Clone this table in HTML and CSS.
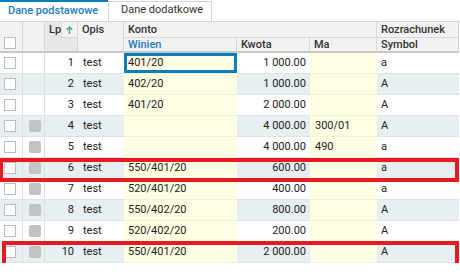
FILE: index.html
```html
<!DOCTYPE html>
<html>
    <head>
        <meta charset="utf-8" />
        <title>Dane podstawowe</title>
        <link rel="stylesheet" href="styles.css">
    </head>
    <body>
        <div class="tabs">
            <div class="tab active">Dane podstawowe</div>
            <div class="tab">Dane dodatkowe</div>
        </div>
        <table class="grid" cellspacing="0" cellpadding="0">
            <colgroup>
                <col style="width:23px"><col style="width:22px"><col style="width:33px"><col style="width:46px">
                <col style="width:113px"><col style="width:73px"><col style="width:67px"><col style="width:82px">
            </colgroup>
            <thead>
                <tr class="h1">
                    <th rowspan="2" class="chk bottom"><span class="box"></span></th>
                    <th rowspan="2"></th>
                    <th rowspan="2" class="lp">
                        <div class="lp-in">
                            <span class="lp-label">Lp</span>
                            <span class="sort">
                                <svg width="7" height="8" viewBox="0 0 7 8"><path d="M3.5 1V8M0.8 3.7L3.5 1L6.2 3.7" fill="none" stroke="#4fae77" stroke-width="1.5"/></svg>
                            </span>
                        </div>
                    </th>
                    <th rowspan="2">Opis</th>
                    <th colspan="3">Konto</th>
                    <th>Rozrachunek</th>
                </tr>
                <tr class="h2">
                    <th class="blue">Winien</th>
                    <th>Kwota</th>
                    <th>Ma</th>
                    <th>Symbol</th>
                </tr>
            </thead>
            <tbody>
                <tr><td class="chk"><span class="box"></span></td><td class="mk"></td><td class="num">1</td><td>test</td><td class="ed focus">401/20</td><td class="num">1&nbsp;000.00</td><td class="ed"></td><td>a</td></tr>
                <tr class="alt"><td class="chk"><span class="box"></span></td><td class="mk"></td><td class="num">2</td><td>test</td><td class="ed">402/20</td><td class="num">1&nbsp;000.00</td><td class="ed"></td><td>A</td></tr>
                <tr><td class="chk"><span class="box"></span></td><td class="mk"></td><td class="num">3</td><td>test</td><td class="ed">401/20</td><td class="num">2&nbsp;000.00</td><td class="ed"></td><td>A</td></tr>
                <tr class="alt"><td class="chk"><span class="box"></span></td><td class="mk"><span class="sq"></span></td><td class="num">4</td><td>test</td><td class="ed"></td><td class="num">4&nbsp;000.00</td><td class="ed">300/01</td><td>A</td></tr>
                <tr><td class="chk"><span class="box"></span></td><td class="mk"><span class="sq"></span></td><td class="num">5</td><td>test</td><td class="ed"></td><td class="num">4&nbsp;000.00</td><td class="ed">490</td><td>a</td></tr>
                <tr class="alt"><td class="chk"><span class="box"></span></td><td class="mk"><span class="sq"></span></td><td class="num">6</td><td>test</td><td class="ed">550/401/20</td><td class="num">600.00</td><td class="ed"></td><td>a</td></tr>
                <tr><td class="chk"><span class="box"></span></td><td class="mk"><span class="sq"></span></td><td class="num">7</td><td>test</td><td class="ed">520/401/20</td><td class="num">400.00</td><td class="ed"></td><td>a</td></tr>
                <tr class="alt"><td class="chk"><span class="box"></span></td><td class="mk"><span class="sq"></span></td><td class="num">8</td><td>test</td><td class="ed">550/402/20</td><td class="num">800.00</td><td class="ed"></td><td>A</td></tr>
                <tr><td class="chk"><span class="box"></span></td><td class="mk"><span class="sq"></span></td><td class="num">9</td><td>test</td><td class="ed">520/402/20</td><td class="num">200.00</td><td class="ed"></td><td>A</td></tr>
                <tr class="alt"><td class="chk"><span class="box"></span></td><td class="mk"><span class="sq"></span></td><td class="num">10</td><td>test</td><td class="ed">550/401/20</td><td class="num">2&nbsp;000.00</td><td class="ed"></td><td>A</td></tr>
            </tbody>
        </table>
        <div class="mark mark-6"></div>
        <div class="mark mark-10"></div>
    </body>
</html>
```

FILE: styles.css
```css
body {
    margin:         0;
    position:       relative;
    font-family:    Roboto, "Liberation Sans", sans-serif;
    font-size:      11px;
    color:          #222;
    background:     #fff;
}

div.tabs {
    display:        flex;
    height:         21px;
}
div.tab {
    box-sizing:     border-box;
    width:          104px;
    height:         20px;
    margin-top:     1px;
    padding:        0 0 0 12px;
    border:         1px solid #d4d4d4;
    border-bottom:  none;
    color:          #333;
    line-height:    16px;
    white-space:    nowrap;
}
div.tab.active {
    width:          108px;
    height:         21px;
    margin-top:     0;
    padding:        1px 0 0 8px;
    border:         none;
    border-top:     2px solid #0a7cc0;
    color:          #1b7bbd;
    font-weight:    500;
}

table.grid {
    table-layout:   fixed;
    width:          459px;
    border-collapse: separate;
    border-spacing: 0;
    border-top:     1px solid #d6d6d6;
}
table.grid th {
    background:     #f2f2f2;
    color:          #333;
    font-weight:    500;
    text-align:     left;
    padding:        0 4px;
    border-right:   1px solid #d8d8d8;
    border-bottom:  1px solid #d8d8d8;
    white-space:    nowrap;
    overflow:       hidden;
}
tr.h1 th {
    height:         15px;
    line-height:    15px;
}
tr.h2 th {
    height:         13px;
    line-height:    13px;
    border-bottom:  2px solid #c8c8c8;
}
tr.h1 th[rowspan] {
    border-bottom:  2px solid #c8c8c8;
    vertical-align: top;
}
table.grid th.chk {
    vertical-align: bottom;
    padding:        0 0 1px 4px;
}
table.grid th.blue {
    color:          #1b7bbd;
}
table.grid th.lp {
    background:     #e8e8e8;
    padding:        0;
}
div.lp-in {
    display:        flex;
    align-items:    flex-start;
}
span.lp-label {
    flex:           1;
    padding-left:   4px;
    line-height:    15px;
}
span.sort {
    box-sizing:     border-box;
    width:          16px;
    height:         16px;
    display:        flex;
    align-items:    center;
    justify-content: center;
    background:     #f2f2f2;
    border-left:    1px solid #d8d8d8;
    border-bottom:  1px solid #d8d8d8;
}

table.grid td {
    height:         20px;
    padding:        0 4px;
    border-bottom:  1px solid #dbe3e9;
    white-space:    nowrap;
    overflow:       hidden;
    line-height:    20px;
}
table.grid tr.alt td {
    background:     #e8eff3;
}
table.grid td.chk {
    padding:        0 0 0 4px;
    border-right:   1px solid #d8e0e6;
}
table.grid td.mk {
    padding:        0 0 0 6px;
    border-right:   1px solid #d8e0e6;
}
table.grid td.num {
    text-align:     right;
}
table.grid td + td.num + td {
    padding-left:   5px;
}
table.grid td.ed,
table.grid tr.alt td.ed {
    background:     #fffee2;
    border-bottom:  1px dotted #ecebd2;
}
table.grid td.focus {
    box-shadow:     inset 0 0 0 3px #0a7cc0;
}

span.box {
    display:        inline-block;
    box-sizing:     border-box;
    width:          12px;
    height:         12px;
    vertical-align: middle;
    background:     #fff;
    border:         1px solid #bdbdbd;
}
span.sq {
    display:        inline-block;
    width:          12px;
    height:         12px;
    vertical-align: middle;
    background:     #c3c3c3;
    border-radius:  2px;
}

div.mark {
    position:       absolute;
    box-sizing:     border-box;
    border:         4px solid #e8191f;
}
div.mark-6 {
    left:           -1px;
    top:            158px;
    width:          460px;
    height:         24px;
}
div.mark-10 {
    left:           2px;
    top:            241px;
    width:          457px;
    height:         29px;
}
```
